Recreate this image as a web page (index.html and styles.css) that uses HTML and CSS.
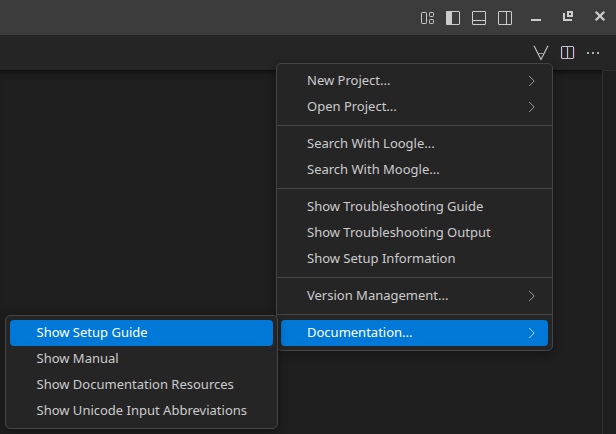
FILE: index.html
```
<!DOCTYPE html>
<html lang="en">
<head>
<meta charset="utf-8">
<title>Editor</title>
<link rel="stylesheet" href="styles.css">
</head>
<body>
<div class="window">
  <header class="titlebar">
    <svg class="layout-icons" width="92" height="16" viewBox="0 0 92 16" fill="none" stroke="#ccc">
      <rect x="1.5" y="2.5" width="5" height="11" rx=".8"/>
      <rect x="9.5" y="2.5" width="4" height="4" rx=".8"/>
      <rect x="9.5" y="9.5" width="4" height="4" rx=".8"/>
      <rect x="26.5" y="1.5" width="13" height="13" rx=".5"/>
      <path d="M26 1.5h6v13h-6z" fill="#ccc" stroke="none"/>
      <rect x="52.5" y="1.5" width="13" height="13" rx=".5"/>
      <path d="M53 10.5h12"/>
      <rect x="78.5" y="1.5" width="13" height="13" rx=".5"/>
      <path d="M86.5 2v12"/>
    </svg>
    <svg class="window-icons" width="76" height="12" viewBox="0 0 76 12" fill="none" stroke="#ccc">
      <path d="M0 10h10" stroke-width="2"/>
      <rect x="37" y="2" width="4" height="4" stroke-width="2"/>
      <path d="M33 3v7h8" stroke-width="2"/>
      <path d="M64.7 1.7l8.6 8.6m0-8.6l-8.6 8.6" stroke-width="2.2"/>
    </svg>
  </header>
  <div class="tabbar">
    <svg width="16" height="16" viewBox="0 0 16 16" fill="none" stroke="#c5c5c5">
      <path d="M1 .8L8 14.5 15 .8" stroke-width="1.1"/>
      <path d="M5 8.5h6" stroke="#999"/>
    </svg>
    <svg width="14" height="16" viewBox="0 0 14 16" fill="none" stroke="#c5c5c5">
      <path d="M1.5 2.5v10M7.5 2.5v10" stroke="#602c24"/>
      <path d="M5.5 2.5v10M11.5 2.5v10" stroke="#182c60"/>
      <path d="M-.5 2v11" stroke="#182c70"/>
      <path d="M13.5 2v11" stroke="#602c24"/>
      <rect x=".5" y="1.5" width="12" height="12" rx=".5"/>
      <path d="M6.5 2v11"/>
    </svg>
    <svg width="14" height="16" viewBox="0 0 14 16" fill="#b0b0b0">
      <path d="M0 7h2v2h-2zM5 7h2v2h-2zM10 7h2v2h-2z"/>
    </svg>
  </div>
  <main class="editor"><div class="code"></div><div class="ruler"></div></main>
</div>

<nav class="menu main-menu">
  <div class="item">New Project...<svg class="chevron" viewBox="0 0 6 11"><path d="M.2 0l5 5-5 5"/></svg></div>
  <div class="item">Open Project...<svg class="chevron" viewBox="0 0 6 11"><path d="M.2 0l5 5-5 5"/></svg></div>
  <div class="separator"></div>
  <div class="item">Search With Loogle...</div>
  <div class="item">Search With Moogle...</div>
  <div class="separator"></div>
  <div class="item">Show Troubleshooting Guide</div>
  <div class="item">Show Troubleshooting Output</div>
  <div class="item">Show Setup Information</div>
  <div class="separator"></div>
  <div class="item">Version Management...<svg class="chevron" viewBox="0 0 6 11"><path d="M.2 0l5 5-5 5"/></svg></div>
  <div class="separator"></div>
  <div class="item selected">Documentation...<svg class="chevron" viewBox="0 0 6 11"><path d="M.2 0l5 5-5 5"/></svg></div>
</nav>
<nav class="menu submenu">
  <div class="item selected">Show Setup Guide</div>
  <div class="item">Show Manual</div>
  <div class="item">Show Documentation Resources</div>
  <div class="item">Show Unicode Input Abbreviations</div>
</nav>
</body>
</html>
```
FILE: styles.css
```
* {
  box-sizing: border-box;
}

body {
  margin: 0;
  background: #1e1e1e;
  color: #ccc;
  font: 13px "Noto Sans", sans-serif;
  overflow: hidden;
}

svg {
  display: block;
  flex: none;
  overflow: visible;
}

.window {
  display: flex;
  flex-direction: column;
  height: 434px;
}

.titlebar {
  display: flex;
  justify-content: flex-end;
  height: 35px;
  padding: 10px 9px 0 0;
  background: #3c3c3c;
}

.layout-icons {
  margin-right: 19px;
}

.tabbar {
  display: flex;
  justify-content: flex-end;
  gap: 12px;
  height: 35px;
  padding: 10px 15px 0 0;
  background: #252526;
}

.editor {
  display: flex;
  flex: 1;
}

.code {
  flex: 1;
  box-shadow: inset 0 6px 6px -6px #000;
}

.ruler {
  width: 14px;
  border-top: 1px solid #303031;
  border-left: 1px solid #303031;
}

.menu {
  position: absolute;
  padding: 4px 0;
  border: 1px solid #454545;
  border-radius: 5px;
  background: #252526;
  box-shadow: 0 2px 8px rgba(0, 0, 0, 0.36);
}

.main-menu {
  left: 276px;
  top: 63px;
  width: 277px;
}

.submenu {
  left: 5px;
  top: 315px;
  width: 273px;
}

.item {
  display: flex;
  align-items: center;
  justify-content: space-between;
  height: 26px;
  margin: 0 4px;
  padding: 0 13px 2px 26px;
  border-radius: 4px;
  white-space: nowrap;
}

.submenu .item {
  padding-left: 26.5px;
}

.selected {
  background: #0078d7;
  color: #fff;
}

.chevron {
  width: 6px;
  height: 11px;
  margin-top: 3px;
  fill: none;
  stroke: currentColor;
  stroke-width: 0.8;
  opacity: 0.9;
}

.separator {
  height: 1px;
  margin: 5px 0;
  background: #454545;
}
```
